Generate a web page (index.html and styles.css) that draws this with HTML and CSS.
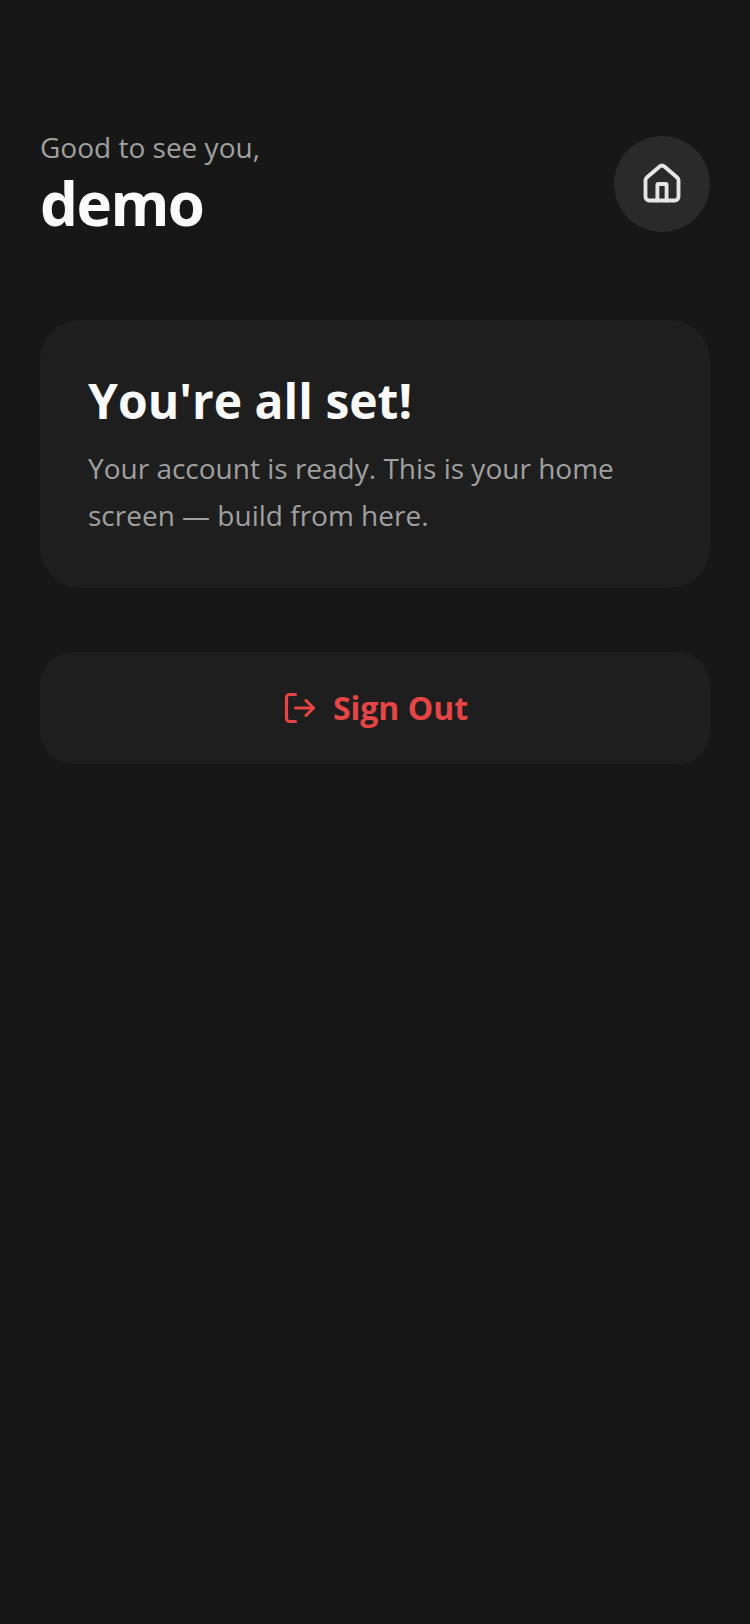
FILE: index.html
```html
<!DOCTYPE html>
<html lang="en">
<head>
<meta charset="utf-8">
<title>Home</title>
<link rel="stylesheet" href="styles.css">
</head>
<body>
<main class="screen">
  <header class="header">
    <div class="greeting">
      <p class="hello">Good to see you,</p>
      <h1 class="name">demo</h1>
    </div>
    <div class="avatar">
      <svg class="home-icon" viewBox="0 0 24 24" fill="none" stroke="currentColor" stroke-width="2.1" stroke-linecap="round" stroke-linejoin="round"><path d="M14.5 21v-8.5a.5.5 0 0 0-.5-.5h-4a.5.5 0 0 0-.5.5V21"/><path d="M3 10a2 2 0 0 1 .709-1.528l7-5.999a2 2 0 0 1 2.582 0l7 5.999A2 2 0 0 1 21 10v9a2 2 0 0 1-2 2H5a2 2 0 0 1-2-2z"/></svg>
    </div>
  </header>
  <section class="card">
    <h2 class="title">You're all set!</h2>
    <p class="body">Your account is ready. This is your home screen — build from here.</p>
  </section>
  <button class="signout" type="button">
    <svg class="out-icon" viewBox="0 0 24 24" fill="none" stroke="currentColor" stroke-width="2.1" stroke-linecap="round" stroke-linejoin="round"><path d="M9 21H5a2 2 0 0 1-2-2V5a2 2 0 0 1 2-2h4"/><path d="m16 17 5-5-5-5"/><path d="M21 12H9"/></svg>
    <span class="signout-label">Sign Out</span>
  </button>
</main>
</body>
</html>
```
FILE: styles.css
```css
* { box-sizing: border-box; }
html, body { margin: 0; padding: 0; height: 100%; }
body { background: #171717; font-family: "Open Sans", sans-serif; color: #fafafa; }
.screen { display: flex; flex-direction: column; padding: 128px 40px 0; min-height: 1624px; }
.header { display: flex; justify-content: space-between; align-items: center; margin-bottom: 80px; }
.hello { margin: 0; font-size: 28px; line-height: 38px; color: #a0a0a0; }
.name { margin: 0; font-size: 60px; line-height: 74px; font-weight: 700; letter-spacing: -1.5px; color: #fafafa; }
.avatar { width: 96px; height: 96px; border-radius: 50%; background: #2a2a2a; display: flex; align-items: center; justify-content: center; color: #e5e5e5; }
.home-icon { width: 44px; height: 44px; }
.card { background: #1e1e1e; border-radius: 40px; padding: 48px 48px 49px; margin-bottom: 64px; }
.title { margin: 0 0 11px; font-size: 48px; line-height: 66px; font-weight: 700; color: #fafafa; }
.body { margin: 0; font-size: 28px; line-height: 47px; color: #a0a0a0; }
.signout { display: flex; align-items: center; justify-content: center; gap: 15px; height: 112px; border: 0; border-radius: 32px; background: #1e1e1e; color: #e54545; font-family: inherit; font-size: 32px; font-weight: 700; }
.signout-label { padding-bottom: 2px; }
.out-icon { width: 36px; height: 36px; }
```
